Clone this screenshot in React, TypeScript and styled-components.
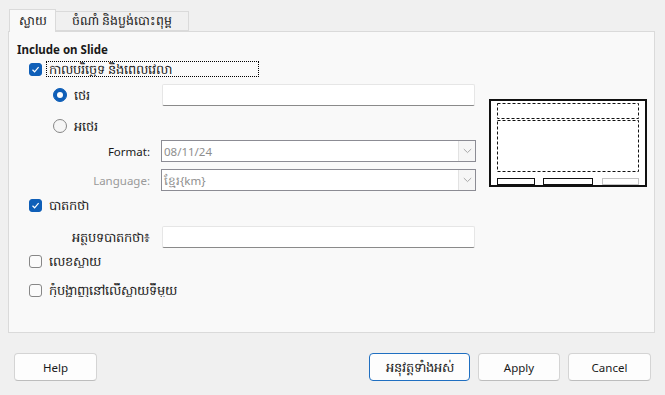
import React from "react";
import styled, { createGlobalStyle } from "styled-components";

const Global = createGlobalStyle`
  html, body { margin: 0; padding: 0; background: #f0f0f0; }
  body { font-family: "Noto Sans", "Open Sans", sans-serif; font-size: 11.5px; color: #1a1a1a; }
  * { box-sizing: border-box; }
`;

const Kh = styled.span<{ $size?: number }>`
  font-size: ${(p) => p.$size ?? 13}px;
  line-height: 1;
`;

const Dialog = styled.div`
  width: 665px;
  height: 395px;
  background: #f0f0f0;
  display: flex;
  flex-direction: column;
  padding: 9px 10px 0 8px;
`;

const TabBar = styled.div`
  display: flex;
  align-items: flex-end;
  height: 22px;
  padding-left: 1px;
`;

const Tab = styled.div<{ $active?: boolean; $w: number }>`
  width: ${(p) => p.$w}px;
  height: ${(p) => (p.$active ? 23 : 20)}px;
  margin-bottom: ${(p) => (p.$active ? -1 : 0)}px;
  background: ${(p) => (p.$active ? "#f9f9f9" : "#f0f0f0")};
  border: 1px solid #dadada;
  border-bottom: ${(p) => (p.$active ? "none" : "1px solid #dadada")};
  border-left: ${(p) => (p.$active ? "1px solid #dadada" : "none")};
  display: flex;
  align-items: center;
  justify-content: center;
  white-space: nowrap;
  overflow: hidden;
  color: #1a1a1a;
  position: relative;
  z-index: ${(p) => (p.$active ? 1 : 0)};
`;

const Panel = styled.div`
  height: 302px;
  background: #f9f9f9;
  border: 1px solid #dadada;
  padding: 8px 8px 0 8px;
  display: flex;
  gap: 13px;
`;

const Form = styled.div`
  width: 459px;
  display: flex;
  flex-direction: column;
`;

const Heading = styled.div`
  height: 17px;
  line-height: 17px;
  font-weight: bold;
  font-size: 11.5px;
  color: #1a1a1a;
  margin-top: 1px;
`;

const Row = styled.div<{ $mt: number; $h: number; $indent?: number }>`
  margin-top: ${(p) => p.$mt}px;
  height: ${(p) => p.$h}px;
  padding-left: ${(p) => p.$indent ?? 0}px;
  display: flex;
  align-items: center;
`;

const FieldRow = styled.div<{ $mt: number }>`
  margin-top: ${(p) => p.$mt}px;
  height: 22px;
  display: grid;
  grid-template-columns: 133px 315px;
  column-gap: 11px;
  align-items: center;
`;

const LeftCell = styled.div<{ $indent?: number }>`
  padding-left: ${(p) => p.$indent ?? 0}px;
  display: flex;
  align-items: center;
`;

const FieldLabel = styled.div<{ $disabled?: boolean }>`
  text-align: right;
  color: ${(p) => (p.$disabled ? "#9a9a9a" : "#1a1a1a")};
  white-space: nowrap;
`;

const Box = styled.span<{ $checked?: boolean }>`
  width: 13px;
  height: 13px;
  border-radius: 3px;
  flex: none;
  display: inline-flex;
  align-items: center;
  justify-content: center;
  background: ${(p) => (p.$checked ? "#0f5fb8" : "#fbfbfb")};
  border: 1px solid ${(p) => (p.$checked ? "#0f5fb8" : "#878787")};
`;

const Radio = styled.span<{ $checked?: boolean }>`
  width: 14px;
  height: 14px;
  border-radius: 50%;
  flex: none;
  display: inline-flex;
  align-items: center;
  justify-content: center;
  background: ${(p) => (p.$checked ? "#0f5fb8" : "#f6f6f6")};
  border: 1px solid ${(p) => (p.$checked ? "#0f5fb8" : "#878787")};
  &::after {
    content: "";
    display: ${(p) => (p.$checked ? "block" : "none")};
    width: 6px;
    height: 6px;
    border-radius: 50%;
    background: #fff;
  }
`;

const Label = styled.span<{ $focus?: boolean; $w?: number }>`
  margin-left: 4px;
  white-space: nowrap;
  height: 16px;
  display: inline-flex;
  align-items: center;
  padding: 0 2px;
  border: 1px dotted ${(p) => (p.$focus ? "#000" : "transparent")};
  width: ${(p) => (p.$w ? `${p.$w}px` : "auto")};
  overflow: hidden;
`;

const TextInput = styled.div`
  height: 22px;
  margin-left: 1px;
  width: 313px;
  background: #fff;
  border: 1px solid #e6e6e6;
  border-bottom: 1px solid #8a8a8a;
  border-radius: 2px;
`;

const Select = styled.div`
  height: 22px;
  width: 315px;
  background: #fff;
  border: 1px solid #8c8c94;
  display: flex;
  align-items: center;
  justify-content: space-between;
  padding-left: 2px;
  color: #8e8e8e;
`;

const DropBtn = styled.span`
  width: 17px;
  height: 20px;
  background: #f6f6f6;
  border-left: 1px solid #e2e2e2;
  display: inline-flex;
  align-items: center;
  justify-content: center;
`;

const Preview = styled.div`
  margin-top: 59px;
  width: 158px;
  height: 88px;
`;

const ButtonBar = styled.div`
  margin-top: 20px;
  padding: 0 4px 0 6px;
  display: flex;
  justify-content: space-between;
`;

const Group = styled.div`
  display: flex;
  gap: 8px;
`;

const Button = styled.button<{ $w: number; $default?: boolean }>`
  width: ${(p) => p.$w}px;
  height: 28px;
  border-radius: 4px;
  background: #fdfdfd;
  border: 1px solid ${(p) => (p.$default ? "#1f6fc1" : "#d4d4d4")};
  border-bottom-color: ${(p) => (p.$default ? "#1f6fc1" : "#bdbdbd")};
  font-family: "Noto Sans", "Open Sans", sans-serif;
  font-size: 11.5px;
  color: #1a1a1a;
  padding: 0;
  white-space: nowrap;
  overflow: hidden;
`;

const Check = () => (
  <svg width="9" height="9" viewBox="0 0 9 9">
    <path d="M1.5 4.8 L3.6 6.8 L7.6 2.2" fill="none" stroke="#fff" strokeWidth="1.2" />
  </svg>
);

const Chevron = () => (
  <svg width="9" height="6" viewBox="0 0 9 6">
    <path d="M0.8 1 L4.5 4.6 L8.2 1" fill="none" stroke="#a8a8a8" strokeWidth="1" />
  </svg>
);

const CheckBox = ({ checked }: { checked?: boolean }) => (
  <Box $checked={checked}>{checked && <Check />}</Box>
);

const LayoutPreview = () => (
  <svg width="158" height="88" viewBox="0 0 158 88">
    <rect x="1" y="1" width="156" height="86" fill="#fff" stroke="#111" strokeWidth="2" />
    <rect x="8.5" y="4.5" width="141" height="15" fill="none" stroke="#111" strokeWidth="1" strokeDasharray="3 2" />
    <rect x="8.5" y="21.5" width="141" height="51" fill="none" stroke="#111" strokeWidth="1" strokeDasharray="3 2" />
    <rect x="8.5" y="79.5" width="37" height="6" fill="none" stroke="#111" strokeWidth="1" />
    <rect x="54.5" y="79.5" width="49" height="6" fill="none" stroke="#111" strokeWidth="1" />
    <rect x="113.5" y="79.5" width="36" height="6" fill="none" stroke="#c4c4c4" strokeWidth="1" />
  </svg>
);

export default function App() {
  return (
    <>
      <Global />
      <Dialog>
        <TabBar>
          <Tab $active $w={47}><Kh $size={12.5}>ស្លាយ</Kh></Tab>
          <Tab $w={133}><Kh $size={12.5}>ចំណាំ និងប្លង់បោះពុម្ព</Kh></Tab>
        </TabBar>
        <Panel>
          <Form>
            <Heading>Include on Slide</Heading>
            <Row $mt={3} $h={16} $indent={12}>
              <CheckBox checked />
              <Label $focus $w={213}><Kh>កាលបរិច្ឆេទ និង​ពេលវេលា</Kh></Label>
            </Row>
            <FieldRow $mt={7}>
              <LeftCell $indent={36}>
                <Radio $checked />
                <Label><Kh>ថេរ</Kh></Label>
              </LeftCell>
              <TextInput />
            </FieldRow>
            <Row $mt={9} $h={22} $indent={36}>
              <Radio />
              <Label><Kh>អថេរ</Kh></Label>
            </Row>
            <FieldRow $mt={3}>
              <FieldLabel>Format:</FieldLabel>
              <Select>
                <span>08/11/24</span>
                <DropBtn><Chevron /></DropBtn>
              </Select>
            </FieldRow>
            <FieldRow $mt={7}>
              <FieldLabel $disabled>Language:</FieldLabel>
              <Select>
                <span><Kh $size={12}>ខ្មែរ</Kh>{"{km}"}</span>
                <DropBtn><Chevron /></DropBtn>
              </Select>
            </FieldRow>
            <Row $mt={6} $h={16} $indent={12}>
              <CheckBox checked />
              <Label><Kh>បាតកថា</Kh></Label>
            </Row>
            <FieldRow $mt={13}>
              <FieldLabel><Kh>អត្ថបទបាតកថា៖</Kh></FieldLabel>
              <TextInput />
            </FieldRow>
            <Row $mt={5} $h={16} $indent={12}>
              <CheckBox />
              <Label><Kh>លេខស្លាយ</Kh></Label>
            </Row>
            <Row $mt={13} $h={16} $indent={12}>
              <CheckBox />
              <Label><Kh>កុំបង្ហាញនៅលើស្លាយទីមួយ</Kh></Label>
            </Row>
          </Form>
          <Preview>
            <LayoutPreview />
          </Preview>
        </Panel>
        <ButtonBar>
          <Button $w={83}>Help</Button>
          <Group>
            <Button $w={101} $default><Kh $size={13}>អនុវត្តទាំងអស់</Kh></Button>
            <Button $w={82}>Apply</Button>
            <Button $w={83}>Cancel</Button>
          </Group>
        </ButtonBar>
      </Dialog>
    </>
  );
}
